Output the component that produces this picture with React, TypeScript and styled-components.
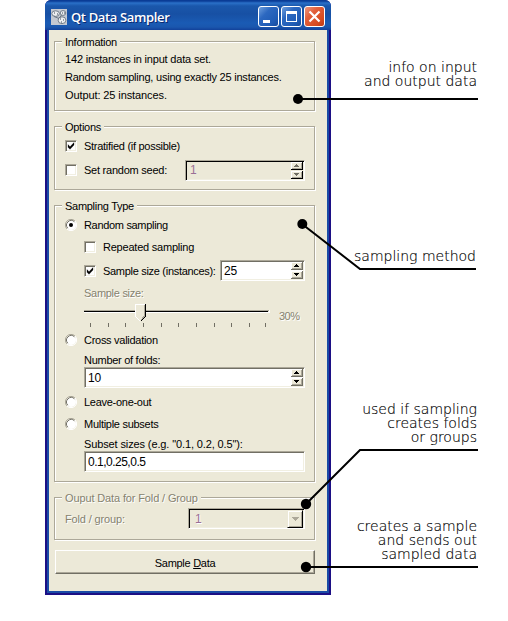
import React from "react";
import styled, { createGlobalStyle } from "styled-components";

const FACE = "#ece9d8";
const SHADE = "#aca899";
const DARK = "#716f64";

const GlobalStyle = createGlobalStyle`
  * { box-sizing: border-box; }
  body { margin: 0; background: #fff; overflow: hidden; }
`;

const Page = styled.main`
  position: relative;
  display: flex;
  width: 508px;
  height: 621px;
  padding-left: 45px;
  background: #fff;
  font-family: "Liberation Sans", Arial, sans-serif;
  font-size: 11px;
  color: #000;
`;

const Window = styled.section`
  width: 286px;
  height: 595px;
  border-radius: 6px 6px 0 0;
  background: #1c0f85;
  padding: 0 2px 2px;
`;

const TitleBar = styled.header`
  display: flex;
  align-items: center;
  height: 30px;
  margin: 0 -2px;
  padding: 3px 6px 0 6px;
  border-radius: 6px 6px 0 0;
  background: linear-gradient(#0a3c96 0, #0a3c96 1px, #2a70c8 3px, #1a57ab 6px, #1750a4 14px, #1a5bb4 23px, #1a57ae 27px, #12419a 30px);
`;

const Title = styled.h1`
  flex: 1;
  margin: 0 0 0 4px;
  font: 600 13px/18px "Open Sans", sans-serif;
  letter-spacing: -0.36px;
  white-space: nowrap;
  color: #fff;
  text-shadow: 1px 1px 0 #0b2a72;
`;

const CaptionButton = styled.span<{ $close?: boolean }>`
  display: flex;
  width: 21px;
  height: 21px;
  margin-left: 2px;
  border: 1px solid #fff;
  border-radius: 3px;
  background: ${(p) =>
    p.$close
      ? "linear-gradient(135deg, #ec9880, #e2603c 35%, #d84c20 75%, #bd3a14)"
      : "linear-gradient(135deg, #6f9fdd, #2c68c0 35%, #1f5cb6 75%, #174a9c)"};
`;

const Client = styled.div`
  display: flex;
  flex-direction: column;
  height: 563px;
  padding: 11px 0 0 5px;
  border: 2px solid #1a4ba6;
  border-top: 0;
  background: ${FACE};
`;

const Group = styled.section<{ $h: number; $dim?: boolean }>`
  width: 261px;
  height: ${(p) => p.$h}px;
  margin-bottom: 15px;
  border: 1px solid ${SHADE};
  box-shadow: 1px 1px 0 #fff, inset 1px 1px 0 #fff;
  padding-left: 10px;
  color: ${(p) => (p.$dim ? "#85826f" : "#000")};
  text-shadow: ${(p) => (p.$dim ? "1px 1px 0 #fff" : "none")};
`;

const Text = styled.span<{ $ls?: number }>`
  font-size: 11px;
  letter-spacing: ${(p) => p.$ls ?? -0.28}px;
  white-space: nowrap;
`;

const Legend = styled.h2`
  width: fit-content;
  height: 14px;
  margin: -7px 0 0 -3px;
  padding: 0 3px;
  background: ${FACE};
  font-weight: normal;
  font-size: 11px;
  line-height: 14px;
`;

const Row = styled.div<{ $h: number; $top?: number; $indent?: number }>`
  display: flex;
  align-items: center;
  width: 240px;
  height: ${(p) => p.$h}px;
  margin-top: ${(p) => p.$top ?? 0}px;
  padding-left: ${(p) => p.$indent ?? 0}px;
`;

const DimRow = styled(Row)`
  color: #85826f;
  text-shadow: 1px 1px 0 #fff;
`;

const CheckFrame = styled.span`
  display: flex;
  width: 12px;
  height: 12px;
  margin-right: 7px;
  border: 1px solid;
  border-color: ${SHADE} #fff #fff ${SHADE};
  box-shadow: inset 1px 1px 0 ${DARK}, inset -1px -1px 0 #f1efe2;
  background: #fff;
`;

const RadioIcon = styled.svg`
  width: 12px;
  height: 12px;
  margin-right: 7px;
`;

const Field = styled.div<{ $w: number; $off?: boolean }>`
  display: flex;
  align-items: center;
  width: ${(p) => p.$w}px;
  height: 21px;
  margin-left: auto;
  padding-left: 2px;
  border: 1px solid;
  border-color: ${SHADE} #fff #fff ${SHADE};
  box-shadow: inset 1px 1px 0 ${(p) => (p.$off ? "#000" : DARK)}, inset -1px -1px 0 #f1efe2;
  background: ${(p) => (p.$off ? FACE : "#fff")};
  color: ${(p) => (p.$off ? "#9a6f96" : "#000")};
`;

const Value = styled(Text)<{ $pad?: number }>`
  flex: 1;
  padding-left: ${(p) => p.$pad ?? 1}px;
  font-size: 12px;
`;

const Steppers = styled.span`
  display: flex;
  flex-direction: column;
  gap: 1px;
  align-self: flex-start;
  padding: 1px 1px 0 0;
`;

const Stepper = styled.span<{ $off?: boolean }>`
  display: flex;
  align-items: center;
  justify-content: center;
  width: 12px;
  height: 8px;
  background: ${FACE};
  border-bottom: 1px solid ${(p) => (p.$off ? "#000" : DARK)};
  border-right: 1px solid ${(p) => (p.$off ? "#000" : DARK)};
  box-shadow: inset 1px 1px 0 #fff, inset -1px -1px 0 ${SHADE};
`;

const DropButton = styled.span`
  display: flex;
  align-items: center;
  justify-content: center;
  width: 16px;
  height: 18px;
  margin-right: 1px;
  border: 1px solid;
  border-color: ${FACE} #000 #000 ${FACE};
  box-shadow: inset 1px 1px 0 #fff, inset -1px -1px 0 ${SHADE};
  background: ${FACE};
`;

const SliderRow = styled.div`
  display: flex;
  width: 250px;
  height: 26px;
  margin-top: 2px;
  padding-left: 19px;
`;

const SliderTrack = styled.svg`
  flex: none;
  width: 195px;
  height: 26px;
`;

const PushButton = styled.button`
  width: 260px;
  height: 24px;
  margin: -5px 0 0 1px;
  padding: 0;
  border: 1px solid;
  border-color: #fff ${DARK} ${DARK} #fff;
  box-shadow: inset -1px -1px 0 ${SHADE};
  background: ${FACE};
  font-family: inherit;
  color: #000;
`;

const Notes = styled.aside`
  width: 147px;
  display: flex;
  flex-direction: column;
  padding-right: 1px;
  text-align: right;
`;

const Note = styled.p<{ $top: number; $inset?: number }>`
  margin: ${(p) => p.$top}px ${(p) => p.$inset ?? 0}px 0 0;
  font: 200 14px/14px "DejaVu Sans", Verdana, sans-serif;
  -webkit-text-stroke: 0.15px #000;
  white-space: nowrap;
`;

const Leaders = styled.svg`
  position: absolute;
  inset: 0;
  pointer-events: none;
`;

function Check({ on }: { on?: boolean }) {
  return (
    <CheckFrame>
      {on && (
        <svg width="10" height="10" viewBox="0 0 10 10">
          <path d="M2 3.6 L4 5.8 L8 1.6 V4 L4 8.3 L2 6.2 Z" fill="#000" stroke="#000" strokeWidth=".3" />
        </svg>
      )}
    </CheckFrame>
  );
}

function Radio({ on }: { on?: boolean }) {
  return (
    <RadioIcon viewBox="0 0 12 12">
      <circle cx="6" cy="6" r="5" fill="#fff" />
      <path d="M10 2 A5.5 5.5 0 0 0 2 10" fill="none" stroke={SHADE} />
      <path d="M9.4 2.8 A4.6 4.6 0 0 0 2.8 9.2" fill="none" stroke={DARK} />
      <path d="M10 2 A5.5 5.5 0 0 1 2 10" fill="none" stroke="#fff" />
      {on && <circle cx="6" cy="6" r="2" fill="#000" />}
    </RadioIcon>
  );
}

function Spin({ off }: { off?: boolean }) {
  const fill = off ? DARK : "#000";
  return (
    <Steppers>
      <Stepper $off={off}>
        <svg width="5" height="3" shapeRendering="crispEdges"><path d="M2 0h1v1h1v1h1v1H0V2h1V1h1z" fill={fill} /></svg>
      </Stepper>
      <Stepper $off={off}>
        <svg width="5" height="3" shapeRendering="crispEdges"><path d="M0 0h5v1H4v1H3v1H2V2H1V1H0z" fill={fill} /></svg>
      </Stepper>
    </Steppers>
  );
}

const TICKS = [6, 24, 41, 59, 77, 94, 112, 130, 147, 165, 181];

export default function App() {
  return (
    <>
      <GlobalStyle />
      <Page>
        <Window>
          <TitleBar>
            <svg width="16" height="16" viewBox="0 0 16 16">
              <rect width="16" height="16" fill="#c4c9d2" />
              <g fill="#eef0f2" stroke="#64707e" strokeWidth=".9">
                <ellipse cx="4.6" cy="4.6" rx="3.8" ry="2.8" />
                <ellipse cx="12" cy="4" rx="2.8" ry="2.4" />
                <ellipse cx="11" cy="11.2" rx="3.9" ry="3.4" />
                <path d="M3 7.5 L8 9.5 M10.5 6 L8.5 9" />
              </g>
              <path d="M3 4h1M6 5h1M11 4h1M13 4h1M9 10h1M12 11h1M10 13h1" stroke="#3c4858" />
            </svg>
            <Title>Qt Data Sampler</Title>
            <CaptionButton>
              <svg width="19" height="19"><rect x="4" y="13" width="7" height="3" fill="#fff" /></svg>
            </CaptionButton>
            <CaptionButton>
              <svg width="19" height="19"><path d="M4 4h11v11H4zM5 7v7h9V7z" fill="#fff" fillRule="evenodd" /></svg>
            </CaptionButton>
            <CaptionButton $close>
              <svg width="19" height="19"><path d="M4.5 4.5l10 10M14.5 4.5l-10 10" stroke="#fff" strokeWidth="2.2" /></svg>
            </CaptionButton>
          </TitleBar>
          <Client>
            <Group $h={70}>
              <Legend><Text>Information</Text></Legend>
              <Row $h={18} $top={1}><Text $ls={-0.18}>142 instances in input data set.</Text></Row>
              <Row $h={18}><Text $ls={-0.22}>Random sampling, using exactly 25 instances.</Text></Row>
              <Row $h={18}><Text $ls={-0.1}>Output: 25 instances.</Text></Row>
            </Group>

            <Group $h={64}>
              <Legend><Text>Options</Text></Legend>
              <Row $h={22} $top={1}><Check on /><Text>Stratified (if possible)</Text></Row>
              <Row $h={22} $top={2}>
                <Check /><Text $ls={-0.24}>Set random seed:</Text>
                <Field $w={120} $off><Value $pad={2}>1</Value><Spin off /></Field>
              </Row>
            </Group>

            <Group $h={277}>
              <Legend><Text>Sampling Type</Text></Legend>
              <Row $h={22} $top={1}><Radio on /><Text $ls={-0.32}>Random sampling</Text></Row>
              <Row $h={22} $indent={19}><Check /><Text $ls={-0.22}>Repeated sampling</Text></Row>
              <Row $h={21} $top={2} $indent={19}>
                <Check on /><Text $ls={-0.3}>Sample size (instances):</Text>
                <Field $w={85}><Value>25</Value><Spin /></Field>
              </Row>
              <DimRow $h={16} $top={4} $indent={19}><Text>Sample size:</Text></DimRow>
              <SliderRow>
                <SliderTrack shapeRendering="crispEdges">
                  <path d="M0 7.5H185" stroke={SHADE} />
                  <path d="M0 8.5H184" stroke="#000" />
                  <path d="M0 9.5H185M185.5 7V10" stroke="#fff" />
                  {TICKS.map((x) => <path key={x} d={`M${x + 0.5} 20v4`} stroke={DARK} />)}
                  <path d="M51 1H61V13L56 18L51 13Z" fill={FACE} />
                  <path d="M51.5 14V1.5H61" fill="none" stroke="#fff" />
                  <path d="M60.5 2V13L56.5 17.5" fill="none" stroke={SHADE} />
                  <path d="M61.5 1V13.5L56.5 18.5" fill="none" stroke="#000" />
                  <path d="M51.5 13.5L56 18" fill="none" stroke="#fff" />
                </SliderTrack>
                <DimRow $h={24} $top={1}><Text $ls={-0.5}>30%</Text></DimRow>
              </SliderRow>
              <Row $h={22}><Radio /><Text>Cross validation</Text></Row>
              <Row $h={15} $top={1} $indent={19}><Text>Number of folds:</Text></Row>
              <Row $h={21} $indent={19}>
                <Field $w={221}><Value>10</Value><Spin /></Field>
              </Row>
              <Row $h={22} $top={3}><Radio /><Text>Leave-one-out</Text></Row>
              <Row $h={22}><Radio /><Text>Multiple subsets</Text></Row>
              <Row $h={15} $top={1} $indent={19}><Text $ls={-0.12}>Subset sizes (e.g. "0.1, 0.2, 0.5"):</Text></Row>
              <Row $h={21} $indent={19}><Field $w={221}><Value $ls={-0.5}>0.1,0.25,0.5</Value></Field></Row>
            </Group>

            <Group $h={43} $dim>
              <Legend><Text $ls={-0.13}>Ouput Data for Fold / Group</Text></Legend>
              <Row $h={21} $top={3}>
                <Text $ls={-0.15}>Fold / group:</Text>
                <Field $w={117} $off>
                  <Value $pad={4}>1</Value>
                  <DropButton>
                    <svg width="7" height="4" shapeRendering="crispEdges"><path d="M0 0h7v1H6v1H5v1H4v1H3V3H2V2H1V1H0z" fill={SHADE} /></svg>
                  </DropButton>
                </Field>
              </Row>
            </Group>

            <PushButton><Text>Sample <u>D</u>ata</Text></PushButton>
          </Client>
        </Window>

        <Notes>
          <Note $top={60}>info on input<br />and output data</Note>
          <Note $top={161} $inset={1}>sampling method</Note>
          <Note $top={139}>used if sampling<br />creates folds<br />or groups</Note>
          <Note $top={75}>creates a sample<br />and sends out<br />sampled data</Note>
        </Notes>

        <Leaders width="508" height="621" fill="none" stroke="#000" strokeWidth="2">
          <path d="M298 99H478M302 224L360 269H476M306 504L360 450H478M306 567H478" />
          <g fill="#000" stroke="none">
            <circle cx="298" cy="99" r="5" />
            <circle cx="302.3" cy="224" r="5" />
            <circle cx="306" cy="504" r="5.2" />
            <circle cx="306" cy="567" r="5.2" />
          </g>
        </Leaders>
      </Page>
    </>
  );
}
